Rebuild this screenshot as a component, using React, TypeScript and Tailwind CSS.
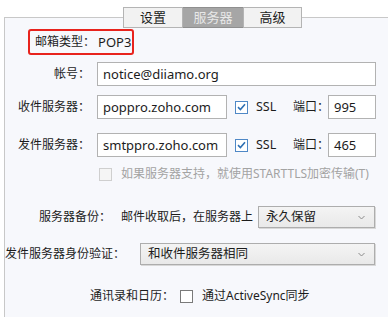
import React from "react";

function CheckBox({ checked = false, disabled = false }: { checked?: boolean; disabled?: boolean }) {
  const cls = disabled
    ? "w-[13px] h-[13px] border border-[#cfcfcf] bg-[#f5f5f5] shrink-0"
    : checked
    ? "w-[13px] h-[13px] border border-[#4f88c6] bg-white shrink-0 flex items-center justify-center"
    : "w-[13px] h-[13px] border border-[#7a7a7a] bg-white shrink-0";
  return (
    <div className={cls}>
      {checked && (
        <svg width="9" height="8" viewBox="0 0 9 8">
          <path d="M1 4.2 L3.4 6.5 L8 1.3" fill="none" stroke="#2d6fb3" strokeWidth="1.6" />
        </svg>
      )}
    </div>
  );
}

function Chevron() {
  return (
    <svg width="7" height="5" viewBox="0 0 7 5" className="shrink-0">
      <path d="M0.5 1 L3.5 4 L6.5 1" fill="none" stroke="#8a8a8a" strokeWidth="1" />
    </svg>
  );
}

function Select({ text, w, h }: { text: string; w: string; h: string }) {
  return (
    <div
      className={`${w} ${h} shrink-0 border border-[#adadad] bg-gradient-to-b from-[#f4f4f4] to-[#e9e9e9] flex items-center justify-between pl-[7px] pr-[9px] shadow-[1px_1px_0_#d8d8d8]`}
    >
      <span className="whitespace-nowrap text-[12.5px]">{text}</span>
      <Chevron />
    </div>
  );
}

function Input({ text, w }: { text: string; w: string }) {
  return (
    <div className={`${w} h-[24px] shrink-0 border border-[#b2b2b2] bg-white flex items-center pl-[5px] text-[13px] whitespace-nowrap`}>
      {text}
    </div>
  );
}

function ServerRow({ label, host, port }: { label: string; host: string; port: string }) {
  return (
    <div className="flex items-center h-[24px] whitespace-nowrap">
      <div className="w-[85px] shrink-0 text-right">{label}</div>
      <div className="ml-[7px] shrink-0">
        <Input text={host} w="w-[130px]" />
      </div>
      <div className="ml-[8px] shrink-0">
        <CheckBox checked />
      </div>
      <span className="ml-[8px] w-[37px] shrink-0 text-[12.5px]">SSL</span>
      <span className="w-[35px] shrink-0">端口：</span>
      <Input text={port} w="w-[48px]" />
    </div>
  );
}

export default function App() {
  return (
    <div className="w-[388px] h-[317px] bg-white overflow-hidden relative font-['Noto_Sans','Noto_Sans_CJK_SC',sans-serif] text-[12px] leading-none text-[#1c1c1c]">
      <div className="absolute top-[7px] left-[123px] flex h-[21px] z-10">
        <div className="w-[60px] h-full border border-[#b4b4b4] bg-[#f2f2f2] flex items-center justify-center text-[13px]">
          设置
        </div>
        <div className="w-[60px] h-full border-y border-[#8f8f8f] bg-[#a6a6a6] flex items-center justify-center text-[13px] text-[#e8e8e8]">
          服务器
        </div>
        <div className="w-[59px] h-full border border-[#b4b4b4] bg-[#f2f2f2] flex items-center justify-center text-[13px]">
          高级
        </div>
      </div>

      <div className="ml-[4px] mt-[17px] h-[300px] border-l border-t border-[#c8c8c8] bg-[#f7f8fc]">
        <div className="ml-[23px] mt-[11px] w-[106px] h-[26px] border-2 border-[#e8231d] rounded-[3px] flex items-center pl-[5px] whitespace-nowrap">
          <span>邮箱类型：</span>
          <span className="ml-[3px] text-[13px]">POP3</span>
        </div>

        <div className="mt-[7px] flex items-center h-[24px]">
          <div className="w-[85px] shrink-0 text-right">帐号：</div>
          <div className="ml-[7px]">
            <Input text="notice@diiamo.org" w="w-[279px]" />
          </div>
        </div>

        <div className="mt-[9px]">
          <ServerRow label="收件服务器：" host="poppro.zoho.com" port="995" />
        </div>
        <div className="mt-[14px]">
          <ServerRow label="发件服务器：" host="smtppro.zoho.com" port="465" />
        </div>

        <div className="mt-[9px] flex items-center h-[16px] pl-[94px] whitespace-nowrap">
          <CheckBox disabled />
          <span className="ml-[9px] text-[#a3a3a3]">如果服务器支持，就使用STARTTLS加密传输(T)</span>
        </div>

        <div className="mt-[24px] flex items-center h-[22px] pl-[34px] whitespace-nowrap">
          <span className="w-[82px] shrink-0">服务器备份：</span>
          <span className="shrink-0">邮件收取后，在服务器上</span>
          <div className="ml-[5px] shrink-0">
            <Select text="永久保留" w="w-[117px]" h="h-[22px]" />
          </div>
        </div>

        <div className="mt-[15px] flex items-center h-[22px] whitespace-nowrap">
          <span className="w-[135px] shrink-0">发件服务器身份验证：</span>
          <Select text="和收件服务器相同" w="w-[235px]" h="h-[22px]" />
        </div>

        <div className="mt-[23px] flex items-center h-[16px] pl-[85px] whitespace-nowrap">
          <span className="w-[90px] shrink-0">通讯录和日历：</span>
          <CheckBox />
          <span className="ml-[9px]">通过ActiveSync同步</span>
        </div>
      </div>
    </div>
  );
}
